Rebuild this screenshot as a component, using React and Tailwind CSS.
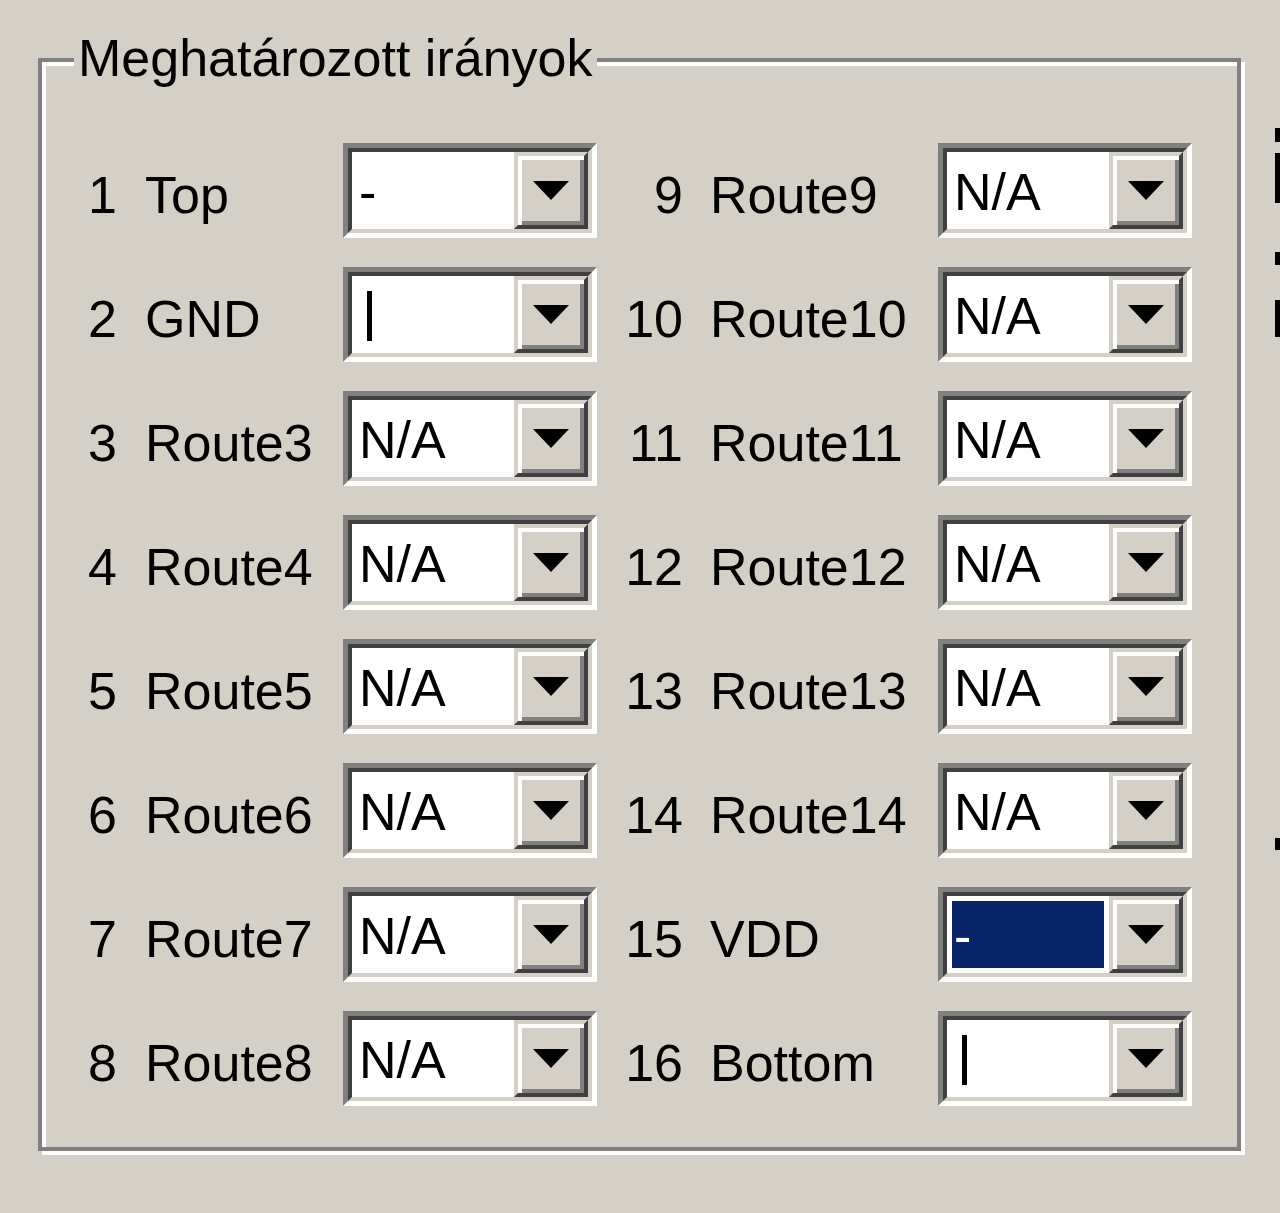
import React from 'react';

const leftRows = [
    { num: '1', label: 'Top', value: '-' },
    { num: '2', label: 'GND', value: '|' },
    { num: '3', label: 'Route3', value: 'N/A' },
    { num: '4', label: 'Route4', value: 'N/A' },
    { num: '5', label: 'Route5', value: 'N/A' },
    { num: '6', label: 'Route6', value: 'N/A' },
    { num: '7', label: 'Route7', value: 'N/A' },
    { num: '8', label: 'Route8', value: 'N/A' },
];

const rightRows = [
    { num: '9', label: 'Route9', value: 'N/A' },
    { num: '10', label: 'Route10', value: 'N/A' },
    { num: '11', label: 'Route11', value: 'N/A' },
    { num: '12', label: 'Route12', value: 'N/A' },
    { num: '13', label: 'Route13', value: 'N/A' },
    { num: '14', label: 'Route14', value: 'N/A' },
    { num: '15', label: 'VDD', value: '-', selected: true },
    { num: '16', label: 'Bottom', value: '|' },
];

// Classic sunken combobox with a raised drop-down button
const Combo = ({ value, selected }) => (
    <div className="w-[254px] h-[95px] border-[5px] border-t-[#808080] border-l-[#808080] border-b-white border-r-white shrink-0">
        <div className="flex h-full border-4 border-t-[#404040] border-l-[#404040] border-b-[#d4d0c8] border-r-[#d4d0c8] bg-white">
            <div className="flex-1 flex p-[5px]">
                <div className={`flex-1 flex items-center pl-[2px] pt-[3px] ${selected ? 'bg-[#0a246a] text-white' : 'text-black'}`}>
                    {value === '|' ? (
                        <div className="w-[5px] h-[50px] bg-black ml-[8px]" />
                    ) : (
                        <span className="leading-none">{value}</span>
                    )}
                </div>
            </div>
            <div className="w-[74px] h-full flex items-center justify-center bg-[#d4d0c8] border-4 border-t-[#d4d0c8] border-l-[#d4d0c8] border-b-[#404040] border-r-[#404040] shadow-[inset_4px_4px_0_#ffffff,inset_-4px_-4px_0_#808080]">
                <svg width="36" height="20" viewBox="0 0 36 20">
                    <polygon points="0,0 36,0 18,19" fill="#000" />
                </svg>
            </div>
        </div>
    </div>
);

const App = () => {
    return (
        <div className="w-[1280px] h-[1213px] bg-[#d4d0c8] overflow-hidden flex text-[52px] text-black" style={{ fontFamily: '"Liberation Sans", Arial, sans-serif' }}>

            {/* Group box */}
            <div className="relative ml-[38px] mt-[58px] w-[1203px] h-[1093px] border-4 border-[#808080] shadow-[inset_4px_4px_0_#ffffff,4px_4px_0_#ffffff] shrink-0">
                <span className="absolute left-[32px] top-[-34px] bg-[#d4d0c8] px-[4px] leading-[60px]">
                    Meghatározott irányok
                </span>

                <div className="flex pt-[81px] pl-[46px]">
                    {/* Left column */}
                    <div className="flex flex-col gap-[29px]">
                        {leftRows.map(row => (
                            <div key={row.num} className="flex items-center h-[95px]">
                                <span className="w-[57px] pt-[8px]">{row.num}</span>
                                <span className="w-[198px] pt-[8px]">{row.label}</span>
                                <Combo value={row.value} />
                            </div>
                        ))}
                    </div>

                    {/* Right column */}
                    <div className="flex flex-col gap-[29px]">
                        {rightRows.map(row => (
                            <div key={row.num} className="flex items-center h-[95px]">
                                <span className="w-[86px] text-right pt-[8px]">{row.num}</span>
                                <span className="w-[255px] pl-[27px] pt-[8px]">{row.label}</span>
                                <Combo value={row.value} selected={row.selected} />
                            </div>
                        ))}
                    </div>
                </div>
            </div>

            {/* Clipped controls at the right edge */}
            <div className="ml-[34px] flex flex-col shrink-0">
                <div className="mt-[128px] w-[6px] h-[14px] bg-black" />
                <div className="mt-[11px] w-[6px] h-[50px] bg-black" />
                <div className="mt-[49px] w-[6px] h-[13px] bg-black" />
                <div className="mt-[35px] w-[6px] h-[37px] bg-black" />
                <div className="mt-[501px] w-[6px] h-[12px] bg-black" />
            </div>
        </div>
    );
};

export default App;
